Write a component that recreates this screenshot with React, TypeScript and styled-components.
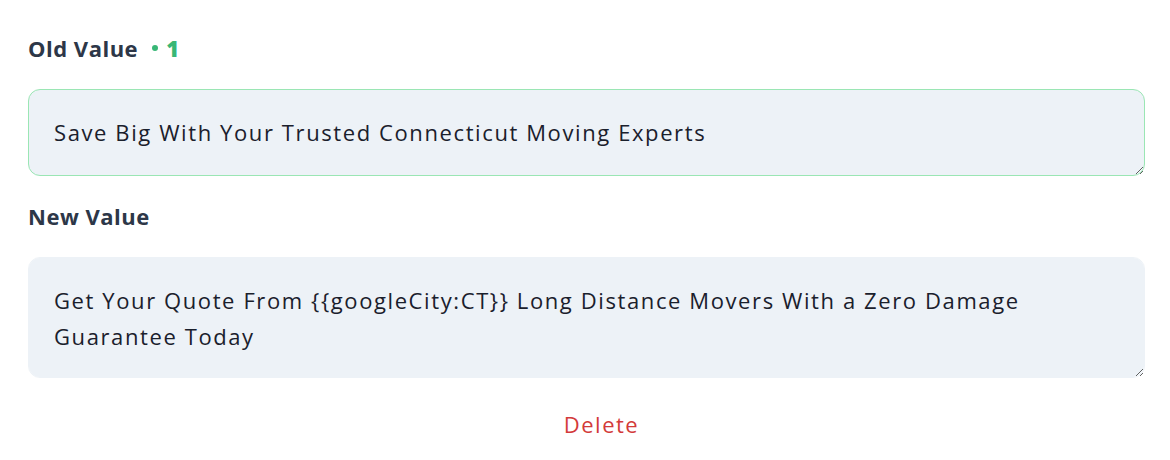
import React from "react";
import styled, { createGlobalStyle } from "styled-components";

const GlobalStyle = createGlobalStyle`
  html, body {
    margin: 0;
    padding: 0;
    background: #ffffff;
  }
  body {
    font-family: "Open Sans", "Noto Sans", sans-serif;
  }
`;

const App: React.FC = () => {
  return (
    <>
      <GlobalStyle />
      <Container>
        <Field>
          <Label>
            Old Value
            <Count>
              <Dot />1
            </Count>
          </Label>
          <TextArea
            $changed
            $height={87}
            defaultValue="Save Big With Your Trusted Connecticut Moving Experts"
          />
        </Field>

        <Field>
          <Label>New Value</Label>
          <TextArea
            $height={121}
            defaultValue="Get Your Quote From {{googleCity:CT}} Long Distance Movers With a Zero Damage Guarantee Today"
          />
        </Field>

        <Actions>
          <DeleteButton>Delete</DeleteButton>
        </Actions>
      </Container>
    </>
  );
};

export default App;

const Container = styled.div`
  display: flex;
  flex-direction: column;
  padding: 30px 25px 0 28px;
`;

const Field = styled.div`
  display: flex;
  flex-direction: column;
  margin-bottom: 22px;
`;

const Label = styled.div`
  display: flex;
  align-items: center;
  height: 36px;
  margin-bottom: 23px;
  font-size: 22px;
  font-weight: 700;
  letter-spacing: 0.5px;
  color: #2d3748;
`;

const Count = styled.span`
  display: flex;
  align-items: center;
  margin-left: 14px;
  color: #38b776;
  font-weight: 800;
`;

const Dot = styled.span`
  width: 6px;
  height: 6px;
  border-radius: 50%;
  background: #38b776;
  margin-right: 8px;
`;

const TextArea = styled.textarea<{ $changed?: boolean; $height: number }>`
  box-sizing: border-box;
  width: 100%;
  height: ${(p) => p.$height}px;
  padding: 24px 25px;
  border: 1px solid ${(p) => (p.$changed ? "#9ae6b4" : "#edf2f7")};
  border-radius: 12px;
  background: #edf2f7;
  color: #1a202c;
  font-family: "Open Sans", "Noto Sans", sans-serif;
  font-size: 22px;
  letter-spacing: 1.6px;
  line-height: 36px;
  outline: none;
  resize: vertical;
`;

const Actions = styled.div`
  display: flex;
  justify-content: center;
  padding-top: 1px;
  padding-left: 30px;
`;

const DeleteButton = styled.button`
  border: none;
  background: none;
  padding: 8px 12px;
  font-family: "Open Sans", "Noto Sans", sans-serif;
  font-size: 22px;
  letter-spacing: 1.5px;
  color: #d33a3a;
  cursor: pointer;
`;
